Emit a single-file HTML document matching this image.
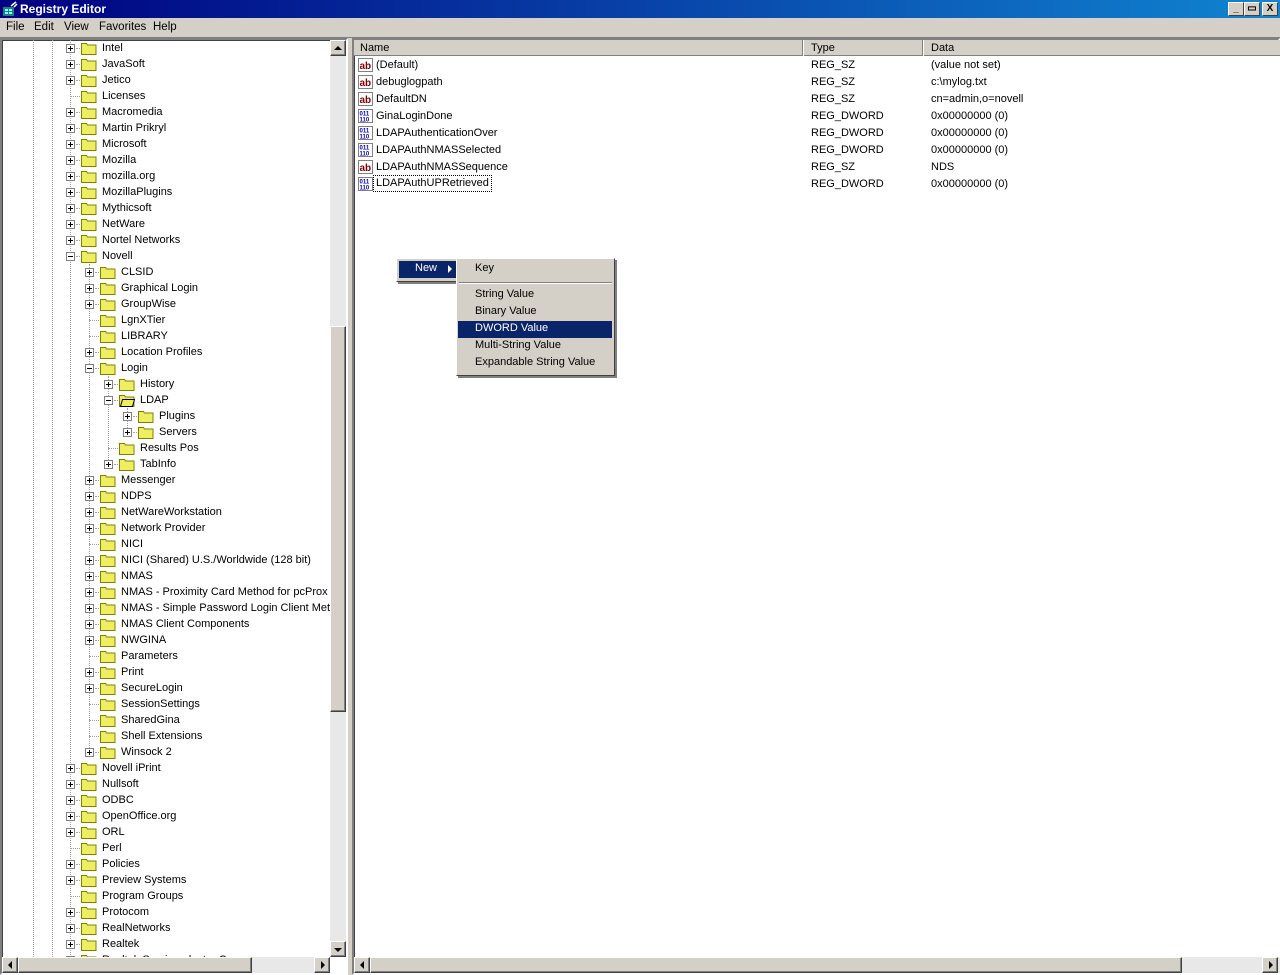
<!DOCTYPE html>
<html><head><meta charset="utf-8"><style>
*{margin:0;padding:0;box-sizing:border-box}
body{width:1280px;height:975px;background:#d4d0c8;font-family:"Liberation Sans",Tahoma,sans-serif;font-size:11px;position:relative;overflow:hidden;color:#000}
.a{position:absolute}
#title{left:0;top:0;width:1280px;height:18px;background:linear-gradient(to right,#000080,#1084d0);color:#fff;font-weight:bold;font-size:12px}
#title span{position:absolute;left:20px;top:2px}
.tb{position:absolute;top:2px;width:16px;height:14px;background:#d4d0c8;border:1px solid;border-color:#fff #404040 #404040 #fff;font-size:10px;font-weight:bold;text-align:center;line-height:12px;color:#000}
#menu span{position:absolute;top:21px;font-size:11.5px}
.pane{background:#fff;border:2px solid;border-color:#808080 #fff #fff #808080;box-shadow:inset 1px 1px 0 #404040}
.r{position:absolute;height:16px;white-space:nowrap;line-height:16px;font-size:11px}
.bx{position:absolute;top:4px;width:9px;height:9px;border:1px solid #808080;background:#fff}
.bx:before{content:"";position:absolute;left:1px;top:3px;width:5px;height:1px;background:#000}
.p:after{content:"";position:absolute;left:3px;top:1px;width:1px;height:5px;background:#000}
.hl{position:absolute;top:8px;height:1px;border-top:1px dotted #a0a0a0}
.fd{position:absolute;top:1px;width:16px;height:14px}
.fdd{fill:#eeee60;stroke:#808000}
.t{position:absolute;top:0}
.vl{position:absolute;width:1px;border-left:1px dotted #a0a0a0}
.lr{position:absolute;left:358px;height:17px;line-height:17px;font-size:11px;white-space:nowrap}
.lr .ic{position:absolute;left:0;top:1px;width:16px;height:15px}
.lr .n{position:absolute;left:18px}
.btn{position:absolute;background:#d4d0c8;border:1px solid;border-color:#fff #404040 #404040 #fff;box-shadow:inset -1px -1px 0 #808080}
.tri{position:absolute;width:0;height:0}
.mi{position:absolute;left:475px;font-size:11px}
</style></head><body>
<div id="title" class="a">
<svg class="a" style="left:2px;top:1px" width="16" height="16"><rect x="1" y="6" width="11" height="9" fill="#208080"/><rect x="3" y="8" width="3" height="2" fill="#80ffff"/><rect x="7" y="8" width="3" height="2" fill="#80ffff"/><rect x="3" y="11" width="3" height="2" fill="#80ffff"/><rect x="7" y="11" width="3" height="2" fill="#80ffff"/><path d="M9 5 L14 1 M12 6 L15 3" stroke="#fff" stroke-width="1.5"/></svg>
<span>Registry Editor</span>
<div class="tb" style="left:1228px">_</div><div class="tb" style="left:1244px">&#9645;</div><div class="tb" style="left:1262px">X</div>
</div>
<div id="menu"><span style="left:6px">File</span><span style="left:34px">Edit</span><span style="left:64px">View</span><span style="left:99px">Favorites</span><span style="left:153px">Help</span></div>
<div class="a" style="left:0;top:37px;width:1280px;height:1px;background:#808080"></div>

<div class="a pane" style="left:0;top:38px;width:348px;height:937px;overflow:hidden">
<div class="a" style="left:0;top:0;width:330px;height:917px;overflow:hidden">
<div class="vl" style="left:31px;top:0;height:917px"></div>
<div class="vl" style="left:50px;top:0;height:917px"></div>
<div class="vl" style="left:68px;top:0;height:917px"></div>
<div class="vl" style="left:87px;top:224px;height:488px"></div>
<div class="vl" style="left:106px;top:336px;height:88px"></div>
<div class="vl" style="left:125px;top:368px;height:24px"></div>
</div>
<div class="a" style="left:328px;top:0;width:16px;height:917px;background:#e8e8e8"></div>
<div class="btn" style="left:328px;top:0;width:16px;height:16px"><div class="tri" style="left:3px;top:5px;border:4px solid transparent;border-bottom:4px solid #000;border-top:0"></div></div>
<div class="btn" style="left:328px;top:286px;width:16px;height:386px"></div>
<div class="btn" style="left:328px;top:901px;width:16px;height:16px"><div class="tri" style="left:3px;top:6px;border:4px solid transparent;border-top:4px solid #000;border-bottom:0"></div></div>
<div class="a" style="left:0;top:917px;width:328px;height:16px;background:#e8e8e8"></div>
<div class="btn" style="left:0;top:917px;width:16px;height:16px"><div class="tri" style="left:5px;top:3px;border:4px solid transparent;border-right:4px solid #000;border-left:0"></div></div>
<div class="btn" style="left:16px;top:917px;width:234px;height:16px"></div>
<div class="btn" style="left:312px;top:917px;width:16px;height:16px"><div class="tri" style="left:6px;top:3px;border:4px solid transparent;border-left:4px solid #000;border-right:0"></div></div>
</div>

<div class="a pane" style="left:352px;top:38px;width:928px;height:937px;overflow:hidden"></div>
<div class="a" style="left:354px;top:40px;width:926px;height:16px;background:#d4d0c8;border-bottom:1px solid #808080"></div>
<div class="a" style="left:802px;top:40px;width:1px;height:16px;background:#808080"></div><div class="a" style="left:803px;top:40px;width:1px;height:16px;background:#fff"></div>
<div class="a" style="left:922px;top:40px;width:1px;height:16px;background:#808080"></div><div class="a" style="left:923px;top:40px;width:1px;height:16px;background:#fff"></div>
<div class="a" style="left:360px;top:42px;font-size:11px">Name</div>
<div class="a" style="left:811px;top:42px;font-size:11px">Type</div>
<div class="a" style="left:931px;top:42px;font-size:11px">Data</div>
<div class="a" style="left:354px;top:957px;width:926px;height:16px;background:#e8e8e8"></div>
<div class="btn" style="left:354px;top:957px;width:16px;height:16px"><div class="tri" style="left:5px;top:3px;border:4px solid transparent;border-right:4px solid #000;border-left:0"></div></div>
<div class="btn" style="left:370px;top:957px;width:812px;height:16px"></div>
<div class="btn" style="left:1262px;top:957px;width:16px;height:16px"><div class="tri" style="left:6px;top:3px;border:4px solid transparent;border-left:4px solid #000;border-right:0"></div></div>

<div class="a" style="left:396px;top:258px;width:62px;height:24px;background:#d4d0c8;border:1px solid;border-color:#fff #404040 #404040 #fff;box-shadow:2px 2px 0 #808080"></div>
<div class="a" style="left:399px;top:261px;width:57px;height:17px;background:#0a246a"></div>
<div class="a" style="left:415px;top:262px;color:#fff;font-size:11px">New</div>
<div class="tri a" style="left:448px;top:265px;border:4px solid transparent;border-left:4px solid #fff;border-right:0"></div>
<div class="a" style="left:456px;top:258px;width:159px;height:118px;background:#d4d0c8;border:1px solid;border-color:#fff #404040 #404040 #fff;box-shadow:2px 2px 0 #808080"></div>
<div class="a" style="left:459px;top:282px;width:153px;height:1px;background:#808080;border-bottom:1px solid #fff;box-sizing:content-box"></div>
<div class="a" style="left:458px;top:321px;width:154px;height:17px;background:#0a246a"></div>
<div class="mi a" style="top:262px">Key</div>
<div class="mi a" style="top:288px">String Value</div>
<div class="mi a" style="top:305px">Binary Value</div>
<div class="mi a" style="top:322px;color:#fff">DWORD Value</div>
<div class="mi a" style="top:339px">Multi-String Value</div>
<div class="mi a" style="top:356px">Expandable String Value</div>

<div class="a" style="left:2px;top:40px;width:328px;height:917px;overflow:hidden">
<div class="r" style="top:0px;left:64px"><i class="bx p"></i><i class="hl" style="left:10px;width:6px"></i><svg class="fd" style="left:15px"><path d="M0.5 2.5h5l1 1.5h8.5v9.5h-14.5z" class="fdd"/></svg><span class="t" style="left:36px">Intel</span></div>
<div class="r" style="top:16px;left:64px"><i class="bx p"></i><i class="hl" style="left:10px;width:6px"></i><svg class="fd" style="left:15px"><path d="M0.5 2.5h5l1 1.5h8.5v9.5h-14.5z" class="fdd"/></svg><span class="t" style="left:36px">JavaSoft</span></div>
<div class="r" style="top:32px;left:64px"><i class="bx p"></i><i class="hl" style="left:10px;width:6px"></i><svg class="fd" style="left:15px"><path d="M0.5 2.5h5l1 1.5h8.5v9.5h-14.5z" class="fdd"/></svg><span class="t" style="left:36px">Jetico</span></div>
<div class="r" style="top:48px;left:64px"><i class="hl" style="left:4px;width:12px"></i><svg class="fd" style="left:15px"><path d="M0.5 2.5h5l1 1.5h8.5v9.5h-14.5z" class="fdd"/></svg><span class="t" style="left:36px">Licenses</span></div>
<div class="r" style="top:64px;left:64px"><i class="bx p"></i><i class="hl" style="left:10px;width:6px"></i><svg class="fd" style="left:15px"><path d="M0.5 2.5h5l1 1.5h8.5v9.5h-14.5z" class="fdd"/></svg><span class="t" style="left:36px">Macromedia</span></div>
<div class="r" style="top:80px;left:64px"><i class="bx p"></i><i class="hl" style="left:10px;width:6px"></i><svg class="fd" style="left:15px"><path d="M0.5 2.5h5l1 1.5h8.5v9.5h-14.5z" class="fdd"/></svg><span class="t" style="left:36px">Martin Prikryl</span></div>
<div class="r" style="top:96px;left:64px"><i class="bx p"></i><i class="hl" style="left:10px;width:6px"></i><svg class="fd" style="left:15px"><path d="M0.5 2.5h5l1 1.5h8.5v9.5h-14.5z" class="fdd"/></svg><span class="t" style="left:36px">Microsoft</span></div>
<div class="r" style="top:112px;left:64px"><i class="bx p"></i><i class="hl" style="left:10px;width:6px"></i><svg class="fd" style="left:15px"><path d="M0.5 2.5h5l1 1.5h8.5v9.5h-14.5z" class="fdd"/></svg><span class="t" style="left:36px">Mozilla</span></div>
<div class="r" style="top:128px;left:64px"><i class="bx p"></i><i class="hl" style="left:10px;width:6px"></i><svg class="fd" style="left:15px"><path d="M0.5 2.5h5l1 1.5h8.5v9.5h-14.5z" class="fdd"/></svg><span class="t" style="left:36px">mozilla.org</span></div>
<div class="r" style="top:144px;left:64px"><i class="bx p"></i><i class="hl" style="left:10px;width:6px"></i><svg class="fd" style="left:15px"><path d="M0.5 2.5h5l1 1.5h8.5v9.5h-14.5z" class="fdd"/></svg><span class="t" style="left:36px">MozillaPlugins</span></div>
<div class="r" style="top:160px;left:64px"><i class="bx p"></i><i class="hl" style="left:10px;width:6px"></i><svg class="fd" style="left:15px"><path d="M0.5 2.5h5l1 1.5h8.5v9.5h-14.5z" class="fdd"/></svg><span class="t" style="left:36px">Mythicsoft</span></div>
<div class="r" style="top:176px;left:64px"><i class="bx p"></i><i class="hl" style="left:10px;width:6px"></i><svg class="fd" style="left:15px"><path d="M0.5 2.5h5l1 1.5h8.5v9.5h-14.5z" class="fdd"/></svg><span class="t" style="left:36px">NetWare</span></div>
<div class="r" style="top:192px;left:64px"><i class="bx p"></i><i class="hl" style="left:10px;width:6px"></i><svg class="fd" style="left:15px"><path d="M0.5 2.5h5l1 1.5h8.5v9.5h-14.5z" class="fdd"/></svg><span class="t" style="left:36px">Nortel Networks</span></div>
<div class="r" style="top:208px;left:64px"><i class="bx"></i><i class="hl" style="left:10px;width:6px"></i><svg class="fd" style="left:15px"><path d="M0.5 2.5h5l1 1.5h8.5v9.5h-14.5z" class="fdd"/></svg><span class="t" style="left:36px">Novell</span></div>
<div class="r" style="top:224px;left:83px"><i class="bx p"></i><i class="hl" style="left:10px;width:6px"></i><svg class="fd" style="left:15px"><path d="M0.5 2.5h5l1 1.5h8.5v9.5h-14.5z" class="fdd"/></svg><span class="t" style="left:36px">CLSID</span></div>
<div class="r" style="top:240px;left:83px"><i class="bx p"></i><i class="hl" style="left:10px;width:6px"></i><svg class="fd" style="left:15px"><path d="M0.5 2.5h5l1 1.5h8.5v9.5h-14.5z" class="fdd"/></svg><span class="t" style="left:36px">Graphical Login</span></div>
<div class="r" style="top:256px;left:83px"><i class="bx p"></i><i class="hl" style="left:10px;width:6px"></i><svg class="fd" style="left:15px"><path d="M0.5 2.5h5l1 1.5h8.5v9.5h-14.5z" class="fdd"/></svg><span class="t" style="left:36px">GroupWise</span></div>
<div class="r" style="top:272px;left:83px"><i class="hl" style="left:4px;width:12px"></i><svg class="fd" style="left:15px"><path d="M0.5 2.5h5l1 1.5h8.5v9.5h-14.5z" class="fdd"/></svg><span class="t" style="left:36px">LgnXTier</span></div>
<div class="r" style="top:288px;left:83px"><i class="hl" style="left:4px;width:12px"></i><svg class="fd" style="left:15px"><path d="M0.5 2.5h5l1 1.5h8.5v9.5h-14.5z" class="fdd"/></svg><span class="t" style="left:36px">LIBRARY</span></div>
<div class="r" style="top:304px;left:83px"><i class="bx p"></i><i class="hl" style="left:10px;width:6px"></i><svg class="fd" style="left:15px"><path d="M0.5 2.5h5l1 1.5h8.5v9.5h-14.5z" class="fdd"/></svg><span class="t" style="left:36px">Location Profiles</span></div>
<div class="r" style="top:320px;left:83px"><i class="bx"></i><i class="hl" style="left:10px;width:6px"></i><svg class="fd" style="left:15px"><path d="M0.5 2.5h5l1 1.5h8.5v9.5h-14.5z" class="fdd"/></svg><span class="t" style="left:36px">Login</span></div>
<div class="r" style="top:336px;left:102px"><i class="bx p"></i><i class="hl" style="left:10px;width:6px"></i><svg class="fd" style="left:15px"><path d="M0.5 2.5h5l1 1.5h8.5v9.5h-14.5z" class="fdd"/></svg><span class="t" style="left:36px">History</span></div>
<div class="r" style="top:352px;left:102px"><i class="bx"></i><i class="hl" style="left:10px;width:6px"></i><svg class="fd" style="left:15px"><path d="M0.5 2.5h5l1 1.5h8.5v9.5h-14.5z" class="fdd"/><path d="M3.5 6.5h12l-2 7h-12z" fill="#eeee60" stroke="#000"/></svg><span class="t" style="left:36px">LDAP</span></div>
<div class="r" style="top:368px;left:121px"><i class="bx p"></i><i class="hl" style="left:10px;width:6px"></i><svg class="fd" style="left:15px"><path d="M0.5 2.5h5l1 1.5h8.5v9.5h-14.5z" class="fdd"/></svg><span class="t" style="left:36px">Plugins</span></div>
<div class="r" style="top:384px;left:121px"><i class="bx p"></i><i class="hl" style="left:10px;width:6px"></i><svg class="fd" style="left:15px"><path d="M0.5 2.5h5l1 1.5h8.5v9.5h-14.5z" class="fdd"/></svg><span class="t" style="left:36px">Servers</span></div>
<div class="r" style="top:400px;left:102px"><i class="hl" style="left:4px;width:12px"></i><svg class="fd" style="left:15px"><path d="M0.5 2.5h5l1 1.5h8.5v9.5h-14.5z" class="fdd"/></svg><span class="t" style="left:36px">Results Pos</span></div>
<div class="r" style="top:416px;left:102px"><i class="bx p"></i><i class="hl" style="left:10px;width:6px"></i><svg class="fd" style="left:15px"><path d="M0.5 2.5h5l1 1.5h8.5v9.5h-14.5z" class="fdd"/></svg><span class="t" style="left:36px">TabInfo</span></div>
<div class="r" style="top:432px;left:83px"><i class="bx p"></i><i class="hl" style="left:10px;width:6px"></i><svg class="fd" style="left:15px"><path d="M0.5 2.5h5l1 1.5h8.5v9.5h-14.5z" class="fdd"/></svg><span class="t" style="left:36px">Messenger</span></div>
<div class="r" style="top:448px;left:83px"><i class="bx p"></i><i class="hl" style="left:10px;width:6px"></i><svg class="fd" style="left:15px"><path d="M0.5 2.5h5l1 1.5h8.5v9.5h-14.5z" class="fdd"/></svg><span class="t" style="left:36px">NDPS</span></div>
<div class="r" style="top:464px;left:83px"><i class="bx p"></i><i class="hl" style="left:10px;width:6px"></i><svg class="fd" style="left:15px"><path d="M0.5 2.5h5l1 1.5h8.5v9.5h-14.5z" class="fdd"/></svg><span class="t" style="left:36px">NetWareWorkstation</span></div>
<div class="r" style="top:480px;left:83px"><i class="bx p"></i><i class="hl" style="left:10px;width:6px"></i><svg class="fd" style="left:15px"><path d="M0.5 2.5h5l1 1.5h8.5v9.5h-14.5z" class="fdd"/></svg><span class="t" style="left:36px">Network Provider</span></div>
<div class="r" style="top:496px;left:83px"><i class="hl" style="left:4px;width:12px"></i><svg class="fd" style="left:15px"><path d="M0.5 2.5h5l1 1.5h8.5v9.5h-14.5z" class="fdd"/></svg><span class="t" style="left:36px">NICI</span></div>
<div class="r" style="top:512px;left:83px"><i class="bx p"></i><i class="hl" style="left:10px;width:6px"></i><svg class="fd" style="left:15px"><path d="M0.5 2.5h5l1 1.5h8.5v9.5h-14.5z" class="fdd"/></svg><span class="t" style="left:36px">NICI (Shared) U.S./Worldwide (128 bit)</span></div>
<div class="r" style="top:528px;left:83px"><i class="bx p"></i><i class="hl" style="left:10px;width:6px"></i><svg class="fd" style="left:15px"><path d="M0.5 2.5h5l1 1.5h8.5v9.5h-14.5z" class="fdd"/></svg><span class="t" style="left:36px">NMAS</span></div>
<div class="r" style="top:544px;left:83px"><i class="bx p"></i><i class="hl" style="left:10px;width:6px"></i><svg class="fd" style="left:15px"><path d="M0.5 2.5h5l1 1.5h8.5v9.5h-14.5z" class="fdd"/></svg><span class="t" style="left:36px">NMAS - Proximity Card Method for pcProx Login</span></div>
<div class="r" style="top:560px;left:83px"><i class="bx p"></i><i class="hl" style="left:10px;width:6px"></i><svg class="fd" style="left:15px"><path d="M0.5 2.5h5l1 1.5h8.5v9.5h-14.5z" class="fdd"/></svg><span class="t" style="left:36px">NMAS - Simple Password Login Client Method</span></div>
<div class="r" style="top:576px;left:83px"><i class="bx p"></i><i class="hl" style="left:10px;width:6px"></i><svg class="fd" style="left:15px"><path d="M0.5 2.5h5l1 1.5h8.5v9.5h-14.5z" class="fdd"/></svg><span class="t" style="left:36px">NMAS Client Components</span></div>
<div class="r" style="top:592px;left:83px"><i class="bx p"></i><i class="hl" style="left:10px;width:6px"></i><svg class="fd" style="left:15px"><path d="M0.5 2.5h5l1 1.5h8.5v9.5h-14.5z" class="fdd"/></svg><span class="t" style="left:36px">NWGINA</span></div>
<div class="r" style="top:608px;left:83px"><i class="hl" style="left:4px;width:12px"></i><svg class="fd" style="left:15px"><path d="M0.5 2.5h5l1 1.5h8.5v9.5h-14.5z" class="fdd"/></svg><span class="t" style="left:36px">Parameters</span></div>
<div class="r" style="top:624px;left:83px"><i class="bx p"></i><i class="hl" style="left:10px;width:6px"></i><svg class="fd" style="left:15px"><path d="M0.5 2.5h5l1 1.5h8.5v9.5h-14.5z" class="fdd"/></svg><span class="t" style="left:36px">Print</span></div>
<div class="r" style="top:640px;left:83px"><i class="bx p"></i><i class="hl" style="left:10px;width:6px"></i><svg class="fd" style="left:15px"><path d="M0.5 2.5h5l1 1.5h8.5v9.5h-14.5z" class="fdd"/></svg><span class="t" style="left:36px">SecureLogin</span></div>
<div class="r" style="top:656px;left:83px"><i class="hl" style="left:4px;width:12px"></i><svg class="fd" style="left:15px"><path d="M0.5 2.5h5l1 1.5h8.5v9.5h-14.5z" class="fdd"/></svg><span class="t" style="left:36px">SessionSettings</span></div>
<div class="r" style="top:672px;left:83px"><i class="hl" style="left:4px;width:12px"></i><svg class="fd" style="left:15px"><path d="M0.5 2.5h5l1 1.5h8.5v9.5h-14.5z" class="fdd"/></svg><span class="t" style="left:36px">SharedGina</span></div>
<div class="r" style="top:688px;left:83px"><i class="hl" style="left:4px;width:12px"></i><svg class="fd" style="left:15px"><path d="M0.5 2.5h5l1 1.5h8.5v9.5h-14.5z" class="fdd"/></svg><span class="t" style="left:36px">Shell Extensions</span></div>
<div class="r" style="top:704px;left:83px"><i class="bx p"></i><i class="hl" style="left:10px;width:6px"></i><svg class="fd" style="left:15px"><path d="M0.5 2.5h5l1 1.5h8.5v9.5h-14.5z" class="fdd"/></svg><span class="t" style="left:36px">Winsock 2</span></div>
<div class="r" style="top:720px;left:64px"><i class="bx p"></i><i class="hl" style="left:10px;width:6px"></i><svg class="fd" style="left:15px"><path d="M0.5 2.5h5l1 1.5h8.5v9.5h-14.5z" class="fdd"/></svg><span class="t" style="left:36px">Novell iPrint</span></div>
<div class="r" style="top:736px;left:64px"><i class="bx p"></i><i class="hl" style="left:10px;width:6px"></i><svg class="fd" style="left:15px"><path d="M0.5 2.5h5l1 1.5h8.5v9.5h-14.5z" class="fdd"/></svg><span class="t" style="left:36px">Nullsoft</span></div>
<div class="r" style="top:752px;left:64px"><i class="bx p"></i><i class="hl" style="left:10px;width:6px"></i><svg class="fd" style="left:15px"><path d="M0.5 2.5h5l1 1.5h8.5v9.5h-14.5z" class="fdd"/></svg><span class="t" style="left:36px">ODBC</span></div>
<div class="r" style="top:768px;left:64px"><i class="bx p"></i><i class="hl" style="left:10px;width:6px"></i><svg class="fd" style="left:15px"><path d="M0.5 2.5h5l1 1.5h8.5v9.5h-14.5z" class="fdd"/></svg><span class="t" style="left:36px">OpenOffice.org</span></div>
<div class="r" style="top:784px;left:64px"><i class="bx p"></i><i class="hl" style="left:10px;width:6px"></i><svg class="fd" style="left:15px"><path d="M0.5 2.5h5l1 1.5h8.5v9.5h-14.5z" class="fdd"/></svg><span class="t" style="left:36px">ORL</span></div>
<div class="r" style="top:800px;left:64px"><i class="hl" style="left:4px;width:12px"></i><svg class="fd" style="left:15px"><path d="M0.5 2.5h5l1 1.5h8.5v9.5h-14.5z" class="fdd"/></svg><span class="t" style="left:36px">Perl</span></div>
<div class="r" style="top:816px;left:64px"><i class="bx p"></i><i class="hl" style="left:10px;width:6px"></i><svg class="fd" style="left:15px"><path d="M0.5 2.5h5l1 1.5h8.5v9.5h-14.5z" class="fdd"/></svg><span class="t" style="left:36px">Policies</span></div>
<div class="r" style="top:832px;left:64px"><i class="bx p"></i><i class="hl" style="left:10px;width:6px"></i><svg class="fd" style="left:15px"><path d="M0.5 2.5h5l1 1.5h8.5v9.5h-14.5z" class="fdd"/></svg><span class="t" style="left:36px">Preview Systems</span></div>
<div class="r" style="top:848px;left:64px"><i class="hl" style="left:4px;width:12px"></i><svg class="fd" style="left:15px"><path d="M0.5 2.5h5l1 1.5h8.5v9.5h-14.5z" class="fdd"/></svg><span class="t" style="left:36px">Program Groups</span></div>
<div class="r" style="top:864px;left:64px"><i class="bx p"></i><i class="hl" style="left:10px;width:6px"></i><svg class="fd" style="left:15px"><path d="M0.5 2.5h5l1 1.5h8.5v9.5h-14.5z" class="fdd"/></svg><span class="t" style="left:36px">Protocom</span></div>
<div class="r" style="top:880px;left:64px"><i class="bx p"></i><i class="hl" style="left:10px;width:6px"></i><svg class="fd" style="left:15px"><path d="M0.5 2.5h5l1 1.5h8.5v9.5h-14.5z" class="fdd"/></svg><span class="t" style="left:36px">RealNetworks</span></div>
<div class="r" style="top:896px;left:64px"><i class="bx p"></i><i class="hl" style="left:10px;width:6px"></i><svg class="fd" style="left:15px"><path d="M0.5 2.5h5l1 1.5h8.5v9.5h-14.5z" class="fdd"/></svg><span class="t" style="left:36px">Realtek</span></div>
<div class="r" style="top:912px;left:64px"><i class="bx p"></i><i class="hl" style="left:10px;width:6px"></i><svg class="fd" style="left:15px"><path d="M0.5 2.5h5l1 1.5h8.5v9.5h-14.5z" class="fdd"/></svg><span class="t" style="left:36px">Realtek Semiconductor Corp.</span></div>
</div>

<div class="lr" style="top:57px"><svg class="ic"><rect x="0.5" y="0.5" width="14" height="13" fill="#fff" stroke="#808080"/><text x="1.5" y="11" font-size="10" font-weight="bold" fill="#800000" font-family="Liberation Sans">ab</text></svg><span class="n">(Default)</span></div>
<div class="lr" style="top:74px"><svg class="ic"><rect x="0.5" y="0.5" width="14" height="13" fill="#fff" stroke="#808080"/><text x="1.5" y="11" font-size="10" font-weight="bold" fill="#800000" font-family="Liberation Sans">ab</text></svg><span class="n">debuglogpath</span></div>
<div class="lr" style="top:91px"><svg class="ic"><rect x="0.5" y="0.5" width="14" height="13" fill="#fff" stroke="#808080"/><text x="1.5" y="11" font-size="10" font-weight="bold" fill="#800000" font-family="Liberation Sans">ab</text></svg><span class="n">DefaultDN</span></div>
<div class="lr" style="top:108px"><svg class="ic"><rect x="0.5" y="0.5" width="14" height="13" fill="#fff" stroke="#808080"/><text x="1.5" y="6.5" font-size="6" font-weight="bold" fill="#0000c0" font-family="Liberation Sans">011</text><text x="1.5" y="12.5" font-size="6" font-weight="bold" fill="#0000c0" font-family="Liberation Sans">110</text></svg><span class="n">GinaLoginDone</span></div>
<div class="lr" style="top:125px"><svg class="ic"><rect x="0.5" y="0.5" width="14" height="13" fill="#fff" stroke="#808080"/><text x="1.5" y="6.5" font-size="6" font-weight="bold" fill="#0000c0" font-family="Liberation Sans">011</text><text x="1.5" y="12.5" font-size="6" font-weight="bold" fill="#0000c0" font-family="Liberation Sans">110</text></svg><span class="n">LDAPAuthenticationOver</span></div>
<div class="lr" style="top:142px"><svg class="ic"><rect x="0.5" y="0.5" width="14" height="13" fill="#fff" stroke="#808080"/><text x="1.5" y="6.5" font-size="6" font-weight="bold" fill="#0000c0" font-family="Liberation Sans">011</text><text x="1.5" y="12.5" font-size="6" font-weight="bold" fill="#0000c0" font-family="Liberation Sans">110</text></svg><span class="n">LDAPAuthNMASSelected</span></div>
<div class="lr" style="top:159px"><svg class="ic"><rect x="0.5" y="0.5" width="14" height="13" fill="#fff" stroke="#808080"/><text x="1.5" y="11" font-size="10" font-weight="bold" fill="#800000" font-family="Liberation Sans">ab</text></svg><span class="n">LDAPAuthNMASSequence</span></div>
<div class="lr" style="top:176px"><svg class="ic"><rect x="0.5" y="0.5" width="14" height="13" fill="#fff" stroke="#808080"/><text x="1.5" y="6.5" font-size="6" font-weight="bold" fill="#0000c0" font-family="Liberation Sans">011</text><text x="1.5" y="12.5" font-size="6" font-weight="bold" fill="#0000c0" font-family="Liberation Sans">110</text></svg><span class="n" style="outline:1px dotted #000;padding:0 2px;left:16px;line-height:15px">LDAPAuthUPRetrieved</span></div>
<div class="a" style="left:811px;top:57px;font-size:11px;line-height:17px">REG_SZ<br>REG_SZ<br>REG_SZ<br>REG_DWORD<br>REG_DWORD<br>REG_DWORD<br>REG_SZ<br>REG_DWORD</div>
<div class="a" style="left:931px;top:57px;font-size:11px;line-height:17px">(value not set)<br>c:\mylog.txt<br>cn=admin,o=novell<br>0x00000000 (0)<br>0x00000000 (0)<br>0x00000000 (0)<br>NDS<br>0x00000000 (0)</div>
</body></html>
